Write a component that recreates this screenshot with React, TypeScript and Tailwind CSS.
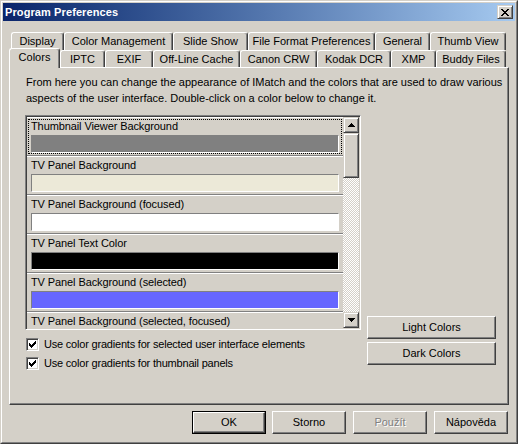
import React from "react";

const FONT = "font-['Liberation_Sans',Arial,sans-serif]";

const raised =
  "border border-t-white border-l-white border-r-[#404040] border-b-[#404040] shadow-[inset_-1px_-1px_0_#808080]";
const raisedSmall =
  "border border-t-[#d4d0c8] border-l-[#d4d0c8] border-r-[#404040] border-b-[#404040] shadow-[inset_1px_1px_0_#fff,inset_-1px_-1px_0_#808080]";
const sunken =
  "border border-t-[#808080] border-l-[#808080] border-r-white border-b-white shadow-[inset_1px_1px_0_#404040,inset_-1px_-1px_0_#d4d0c8]";

const row1 = [
  { label: "Display", w: "w-[53px]" },
  { label: "Color Management", w: "w-[109px]" },
  { label: "Slide Show", w: "w-[75px]" },
  { label: "File Format Preferences", w: "w-[127px]" },
  { label: "General", w: "w-[55px]" },
  { label: "Thumb View", w: "w-[76px]" },
];

const row2 = [
  { label: "IPTC", w: "w-[45px]" },
  { label: "EXIF", w: "w-[48px]" },
  { label: "Off-Line Cache", w: "w-[87px]" },
  { label: "Canon CRW", w: "w-[77px]" },
  { label: "Kodak DCR", w: "w-[74px]" },
  { label: "XMP", w: "w-[45px]" },
  { label: "Buddy Files", w: "w-[70px]" },
];

const colors = [
  { label: "Thumbnail Viewer Background", color: "bg-[#808080]", focused: true },
  { label: "TV Panel Background", color: "bg-[#ece9d8]" },
  { label: "TV Panel Background (focused)", color: "bg-white" },
  { label: "TV Panel Text Color", color: "bg-black" },
  { label: "TV Panel Background (selected)", color: "bg-[#6666ff]" },
  { label: "TV Panel Background (selected, focused)", color: "bg-[#6666ff]" },
];

function Tab({ label, w }: { label: string; w: string }) {
  return (
    <div
      className={`${w} h-full shrink-0 flex items-center justify-center rounded-t-[3px] border-t border-l border-r border-t-white border-l-white border-r-[#404040] shadow-[inset_-1px_0_0_#808080] bg-[#d4d0c8]`}
    >
      {label}
    </div>
  );
}

function ColorItem({ label, color, focused }: { label: string; color: string; focused?: boolean }) {
  return (
    <div className="relative h-[39px] shrink-0 border-t border-t-white border-b border-b-[#808080] px-[4px]">
      <div className="h-[14px] leading-[14px] mt-[1px] whitespace-nowrap tracking-[-0.1px]">{label}</div>
      <div
        className={`mt-[2px] h-[18px] ${color} border border-t-[#808080] border-l-[#808080] border-r-white border-b-white`}
      />
      {focused && (
        <div className="absolute inset-[1px] border border-dotted border-black pointer-events-none" />
      )}
    </div>
  );
}

function Arrow({ down }: { down?: boolean }) {
  return (
    <svg width="7" height="4" viewBox="0 0 7 4" className={down ? "rotate-180" : ""}>
      <path d="M3 0h1v1h1v1h1v1h1v1H0V3h1V2h1V1h1z" fill="#000" />
    </svg>
  );
}

function CheckBox({ label }: { label: string }) {
  return (
    <div className="h-[16px] flex items-center">
      <div className={`ml-[1px] w-[13px] h-[13px] bg-white ${sunken} flex items-center justify-center`}>
        <svg width="7" height="7" viewBox="0 0 7 7">
          <path d="M0 2h1v1h1v1h1V3h1V2h1V1h1V0h1v3H6v1H5v1H4v1H3v1H2V6H1V5H0z" fill="#000" />
        </svg>
      </div>
      <span className="ml-[5px] whitespace-nowrap tracking-[-0.2px]">{label}</span>
    </div>
  );
}

export default function App() {
  return (
    <div
      className={`${FONT} text-[11px] text-black w-[518px] h-[444px] bg-[#d4d0c8] border border-t-[#d4d0c8] border-l-[#d4d0c8] border-r-[#404040] border-b-[#404040] overflow-hidden`}
    >
      <div className="h-full border border-t-white border-l-white border-r-[#808080] border-b-[#808080] p-[1px] flex flex-col">
        {/* Title bar */}
        <div className="h-[18px] shrink-0 bg-linear-to-r from-[#0a246a] to-[#a6caf0] flex items-center pl-[2px] pr-[2px]">
          <span className="text-white font-bold text-[11px] tracking-[0.1px]">Program Preferences</span>
          <div className="flex-1" />
          <div className={`w-[16px] h-[14px] bg-[#d4d0c8] ${raisedSmall} flex items-center justify-center`}>
            <svg width="8" height="7" viewBox="0 0 8 7">
              <path
                d="M0 0h2v1h1v1h2V1h1V0h2v1H7v1H6v1H5v1h1v1h1v1h1v1H6V6H5V5H3v1H2v1H0V6h1V5h1V4h1V3H2V2H1V1H0z"
                fill="#000"
              />
            </svg>
          </div>
        </div>

        {/* Tabs + panel */}
        <div className="px-[6px] mt-[11px]">
          <div className="h-[18px] flex pl-[2px]">
            {row1.map((t) => (
              <Tab key={t.label} {...t} />
            ))}
          </div>
          <div className="h-[17px] flex">
            <div className="relative z-10 -mt-[2px] h-[20px] w-[51px] shrink-0 flex items-center justify-center rounded-t-[3px] border-t border-l border-r border-t-white border-l-white border-r-[#404040] shadow-[inset_-1px_0_0_#808080] bg-[#d4d0c8] pb-[2px]">
              Colors
            </div>
            {row2.map((t) => (
              <Tab key={t.label} {...t} />
            ))}
          </div>

          <div className="h-[338px] border border-t-white border-l-white border-r-[#404040] border-b-[#404040] shadow-[inset_-1px_-1px_0_#808080] pl-[15px] pt-[6px]">
            <p className="pl-[1px] leading-[16px]">
              From here you can change the appearance of IMatch and the colors that are used to draw various
              <br />
              aspects of the user interface. Double-click on a color below to change it.
            </p>

            <div className="mt-[9px] flex">
              <div>
                <div className={`w-[336px] h-[215px] ${sunken} p-[1px] flex`}>
                  <div className="flex-1 flex flex-col overflow-hidden">
                    {colors.map((c) => (
                      <ColorItem key={c.label} {...c} />
                    ))}
                  </div>
                  <div className="w-[16px] flex flex-col">
                    <div className={`h-[16px] bg-[#d4d0c8] ${raisedSmall} flex items-center justify-center`}>
                      <Arrow />
                    </div>
                    <div className={`h-[45px] bg-[#d4d0c8] ${raisedSmall}`} />
                    <div className="flex-1 bg-[repeating-conic-gradient(#ffffff_0_25%,#d4d0c8_0_50%)] bg-[length:2px_2px]" />
                    <div className={`h-[16px] bg-[#d4d0c8] ${raisedSmall} flex items-center justify-center`}>
                      <Arrow down />
                    </div>
                  </div>
                </div>
                <div className="mt-[6px] flex flex-col gap-[3px]">
                  <CheckBox label="Use color gradients for selected user interface elements" />
                  <CheckBox label="Use color gradients for thumbnail panels" />
                </div>
              </div>

              <div className="ml-[6px] mt-[201px] flex flex-col gap-[3px]">
                <div className={`w-[129px] h-[23px] ${raised} flex items-center justify-center`}>Light Colors</div>
                <div className={`w-[129px] h-[23px] ${raised} flex items-center justify-center`}>Dark Colors</div>
              </div>
            </div>
          </div>
        </div>

        {/* Dialog buttons */}
        <div className="mt-[6px] flex justify-end pr-[7px]">
          <div className="w-[74px] h-[23px] border border-black">
            <div className={`h-full ${raised} flex items-center justify-center`}>OK</div>
          </div>
          <div className={`ml-[6px] w-[74px] h-[23px] ${raised} flex items-center justify-center`}>Storno</div>
          <div
            className={`ml-[7px] w-[74px] h-[23px] ${raised} flex items-center justify-center text-[#808080] [text-shadow:1px_1px_0_#fff]`}
          >
            Použít
          </div>
          <div className={`ml-[7px] w-[74px] h-[23px] ${raised} flex items-center justify-center`}>Nápověda</div>
        </div>
      </div>
    </div>
  );
}
